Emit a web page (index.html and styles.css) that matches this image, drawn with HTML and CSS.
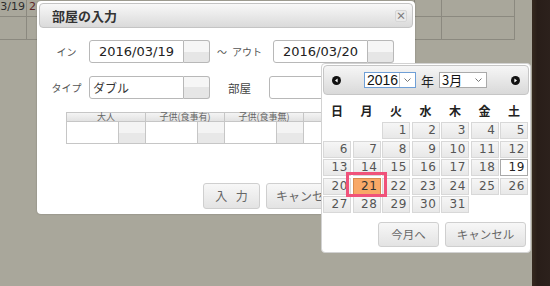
FILE: index.html
```html
<!DOCTYPE html>
<html lang="ja">
<head>
    <meta charset="UTF-8">
    <title>部屋の入力</title>
    <link rel="stylesheet" href="styles.css">
</head>
<body>
<div class="desk">
    <div class="page">
        <div class="sheet">
            <div class="cell first"><span>3/19</span></div>
            <div class="cell"><span class="red">2</span></div>
            <div class="cell"></div>
            <div class="cell"></div>
            <div class="cell blank"></div>
            <div class="cell"></div>
            <div class="cell"></div>
            <div class="cell"></div>
            <div class="cell"></div>
            <div class="cell blank"></div>
        </div>

        <div class="dialog">
            <div class="dlg-title">
                <span>部屋の入力</span>
                <span class="close">×</span>
            </div>
            <div class="dlg-body">
                <div class="row">
                    <span class="lbl">イン</span>
                    <div class="field"><span class="box">2016/03/19</span><span class="btn"></span></div>
                    <span class="sep"><span class="tilde">～</span>アウト</span>
                    <div class="field"><span class="box">2016/03/20</span><span class="btn"></span></div>
                </div>
                <div class="row">
                    <span class="lbl">タイプ</span>
                    <div class="field"><span class="box left">ダブル</span><span class="btn"></span></div>
                    <span class="sep mid">部屋</span>
                    <div class="field"><span class="box"></span><span class="btn"></span></div>
                </div>
                <div class="guests">
                    <div class="gcol"><div class="gh">大人</div><div class="gb"><span class="gin"></span><span class="gbtn"></span></div></div>
                    <div class="gcol"><div class="gh">子供(食事有)</div><div class="gb"><span class="gin"></span><span class="gbtn"></span></div></div>
                    <div class="gcol"><div class="gh">子供(食事無)</div><div class="gb"><span class="gin"></span><span class="gbtn"></span></div></div>
                    <div class="gcol"><div class="gh"></div><div class="gb"><span class="gin"></span><span class="gbtn"></span></div></div>
                </div>
                <div class="actions">
                    <span class="abtn spaced">入 力</span>
                    <span class="abtn wide">キャンセル</span>
                </div>
            </div>
        </div>

        <div class="picker">
            <div class="phead">
                <svg class="nav" width="9" height="9" viewBox="0 0 9 9"><circle cx="4.5" cy="4.5" r="4.5" fill="#111"/><path d="M5.6 2.4 L3 4.5 L5.6 6.6 Z" fill="#fff"/></svg>
                <span class="sel year"><span class="val">2016</span><span class="arr"><svg width="7" height="4" viewBox="0 0 7 4"><path d="M0.5 0.5 L3.5 3.5 L6.5 0.5" fill="none" stroke="#777"/></svg></span></span>
                <span class="nen">年</span>
                <span class="sel month"><span class="val">3月</span><span class="arr"><svg width="7" height="4" viewBox="0 0 7 4"><path d="M0.5 0.5 L3.5 3.5 L6.5 0.5" fill="none" stroke="#777"/></svg></span></span>
                <svg class="nav next" width="9" height="9" viewBox="0 0 9 9"><circle cx="4.5" cy="4.5" r="4.5" fill="#111"/><path d="M3.4 2.4 L6 4.5 L3.4 6.6 Z" fill="#fff"/></svg>
            </div>
            <div class="dnames">
                <span>日</span><span>月</span><span>火</span><span>水</span><span>木</span><span>金</span><span>土</span>
            </div>
            <div class="days">
                <span></span><span></span>
                <span class="d">1</span><span class="d">2</span><span class="d">3</span><span class="d">4</span><span class="d">5</span>
                <span class="d">6</span><span class="d">7</span><span class="d">8</span><span class="d">9</span><span class="d">10</span><span class="d">11</span><span class="d">12</span>
                <span class="d">13</span><span class="d">14</span><span class="d">15</span><span class="d">16</span><span class="d">17</span><span class="d">18</span><span class="d today">19</span>
                <span class="d">20</span><span class="d sel-day">21</span><span class="d">22</span><span class="d">23</span><span class="d">24</span><span class="d">25</span><span class="d">26</span>
                <span class="d">27</span><span class="d">28</span><span class="d">29</span><span class="d">30</span><span class="d">31</span>
            </div>
            <div class="pfoot">
                <span class="pbtn">今月へ</span>
                <span class="pbtn wide">キャンセル</span>
            </div>
        </div>

        <div class="mark"></div>
    </div>
    <div class="edge"></div>
</div>
</body>
</html>
```

FILE: styles.css
```css
* {
    box-sizing: border-box;
}
body {
    margin: 0;
    width: 550px;
    height: 286px;
    overflow: hidden;
    font-family: "Noto Sans CJK JP", sans-serif;
    color: #333;
}
.desk {
    display: flex;
    height: 286px;
}
.page {
    position: relative;
    flex: 1;
    background: #a9a79b;
}
.edge {
    width: 18px;
    background: linear-gradient(90deg, #35291f, #291e19 30%, #2c211c);
}

/* sheet behind the dialog */
.sheet {
    display: grid;
    grid-template-columns: 27px 388px 27px 73px 1fr;
    grid-template-rows: 17px 23px;
}
.sheet .cell {
    border-right: 1px solid #8b897f;
    border-bottom: 1px solid #8b897f;
    font: 11px "DejaVu Sans", sans-serif;
    line-height: 14px;
    color: #2e2e2e;
    white-space: nowrap;
    overflow: hidden;
    padding-left: 2px;
}
.sheet .first {
    display: flex;
    justify-content: flex-end;
    padding: 0 1px 0 0;
}
.sheet .blank {
    border: none;
}
.red {
    color: #5c2626;
}

/* dialog */
.dialog {
    position: absolute;
    left: 37px;
    top: 1px;
    width: 378px;
    height: 213px;
    background: #fff;
    border-radius: 4px;
    padding: 2px;
    box-shadow: 0 0 2px rgba(0, 0, 0, 0.25);
}
.dlg-title {
    display: flex;
    align-items: center;
    justify-content: space-between;
    height: 25px;
    padding: 0 5px 0 12px;
    border: 1px solid #c4c4c4;
    border-radius: 4px;
    background: linear-gradient(#f8f8f8, #dadada);
    font-size: 13px;
    font-weight: bold;
    color: #333;
}
.close {
    width: 12px;
    height: 12px;
    background: #e9e9e9;
    border: 1px solid #d6d6d6;
    border-radius: 2px;
    color: #7a7a7a;
    font-size: 10px;
    font-weight: bold;
    line-height: 10px;
    text-align: center;
}
.dlg-body {
    padding: 12px 0 0 5px;
}
.row {
    display: flex;
    align-items: center;
    height: 23px;
}
.row + .row {
    margin-top: 13px;
}
.lbl {
    width: 45px;
    text-align: center;
    font-size: 10px;
    color: #555;
}
.field {
    display: flex;
    height: 23px;
}
.box {
    width: 95px;
    border: 1px solid #b8b8b8;
    border-radius: 3px 0 0 3px;
    background: #fff;
    font: 13px "DejaVu Sans", sans-serif;
    line-height: 21px;
    text-align: center;
    color: #222;
}
.box.left {
    text-align: left;
    padding-left: 3px;
    font: 12px "Noto Sans CJK JP", sans-serif;
    line-height: 21px;
    color: #333;
}
.btn {
    width: 26px;
    border: 1px solid #b8b8b8;
    border-left: none;
    border-radius: 0 3px 3px 0;
    background: linear-gradient(#f6f6f6 50%, #e6e6e6 50%);
}
.sep {
    width: 63px;
    padding-left: 7px;
    font-size: 10px;
    color: #555;
    white-space: nowrap;
}
.tilde {
    margin-right: 5px;
}
.sep.mid {
    width: 59px;
    padding: 0;
    text-align: center;
    font-size: 11.5px;
    color: #444;
}

/* guests table */
.guests {
    display: flex;
    margin: 13px 0 0 22px;
    border-left: 1px solid #c6c6c6;
}
.gcol {
    width: 79px;
    flex: none;
    border-right: 1px solid #c6c6c6;
}
.gh {
    height: 10px;
    border-top: 1px solid #c6c6c6;
    border-bottom: 1px solid #c6c6c6;
    background: linear-gradient(#f4f4f4, #e2e2e2);
    font-size: 9px;
    line-height: 8px;
    text-align: center;
    color: #666;
    white-space: nowrap;
}
.gb {
    display: flex;
    height: 22px;
    border-bottom: 1px solid #c6c6c6;
}
.gin {
    flex: 1;
    background: #fff;
}
.gbtn {
    width: 27px;
    border-left: 1px solid #c6c6c6;
    background: linear-gradient(#f4f4f4 50%, #e8e8e8 50%);
}
.actions {
    display: flex;
    gap: 6px;
    margin: 39px 0 0 159px;
}
.abtn, .pbtn {
    height: 26px;
    width: 57px;
    border: 1px solid #cfcfcf;
    border-radius: 3px;
    background: linear-gradient(#f7f7f7, #e3e3e3);
    font-size: 12px;
    line-height: 24px;
    text-align: center;
    color: #666;
    white-space: nowrap;
}
.abtn.spaced {
    letter-spacing: 3px;
    padding-left: 3px;
}
.abtn.wide {
    width: 80px;
}

/* date picker */
.picker {
    position: absolute;
    left: 321px;
    top: 63px;
    width: 210px;
    height: 190px;
    background: #fff;
    border: 1px solid #d2d2d2;
    border-radius: 4px;
    padding: 1px;
}
.phead {
    display: flex;
    align-items: center;
    height: 30px;
    padding: 0 8px;
    border: 1px solid #c6c6c6;
    border-radius: 4px;
    background: linear-gradient(#f6f6f6, #d9d9d9);
}
.nav {
    flex: none;
}
.nav.next {
    margin-left: auto;
}
.sel {
    display: flex;
    height: 16px;
    background: #fff;
    border: 1px solid #aaa;
    font: 14px "Liberation Sans", sans-serif;
    line-height: 14px;
    color: #111;
}
.sel .val {
    flex: 1;
    padding-left: 2px;
}
.sel .arr {
    width: 16px;
    display: flex;
    align-items: center;
    justify-content: center;
}
.year {
    width: 52px;
    margin-left: 23px;
    border-color: #6f9fd6;
}
.year .arr {
    border-left: 1px solid #c8c8c8;
}
.month {
    width: 48px;
    margin-left: 5px;
}
.month .val {
    font-family: "Noto Sans CJK JP", sans-serif;
    font-size: 13px;
    line-height: 14px;
}
.nen {
    margin-left: 5px;
    font-size: 13px;
    color: #222;
}
.dnames {
    display: grid;
    grid-template-columns: repeat(7, 28px);
    column-gap: 1.5px;
    margin-top: 5px;
    height: 22px;
    line-height: 22px;
    text-align: center;
    font-size: 12px;
    font-weight: bold;
    color: #222;
}
.days {
    display: grid;
    grid-template-columns: repeat(7, 28px);
    grid-auto-rows: 17px;
    gap: 1.5px;
}
.d {
    border: 1px solid #d8d8d8;
    background: linear-gradient(#f6f6f6, #e8e8e8);
    text-align: right;
    padding-right: 2px;
    font: 12px "DejaVu Sans", sans-serif;
    letter-spacing: 0.6px;
    line-height: 15px;
    color: #555;
}
.d.today {
    background: #fff;
    border-color: #a8a8a8;
    color: #222;
}
.d.sel-day {
    background: #f9a867;
    border-color: #d98b4e;
    color: #333;
}
.pfoot {
    display: flex;
    justify-content: flex-end;
    gap: 6px;
    margin-top: 9px;
    padding-right: 3px;
}
.pbtn {
    height: 25px;
    width: 61px;
    font-size: 11.5px;
    line-height: 23px;
}
.pbtn.wide {
    width: 81px;
}

/* highlight box over the picked day */
.mark {
    position: absolute;
    left: 346px;
    top: 172px;
    width: 41px;
    height: 25px;
    border: 3px solid #f0527a;
}
```
